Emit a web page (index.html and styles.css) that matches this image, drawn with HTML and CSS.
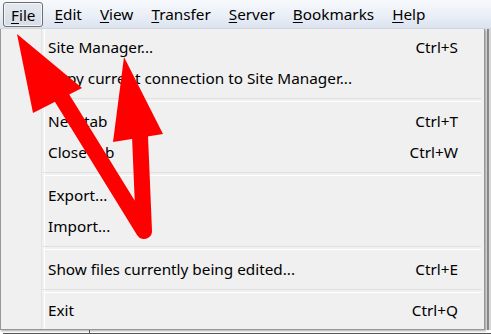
FILE: index.html
```html
<!DOCTYPE html>
<html>
<head>
<meta charset="utf-8">
<title>File menu</title>
<link rel="stylesheet" href="styles.css">
</head>
<body>
<div class="screen">
	<div class="menubar">
		<span class="mitem active"><u>F</u>ile</span>
		<span class="mitem"><u>E</u>dit</span>
		<span class="mitem"><u>V</u>iew</span>
		<span class="mitem"><u>T</u>ransfer</span>
		<span class="mitem"><u>S</u>erver</span>
		<span class="mitem"><u>B</u>ookmarks</span>
		<span class="mitem"><u>H</u>elp</span>
	</div>
	<div class="body">
		<div class="dropdown">
			<div class="row"><span>Site Manager...</span><span class="key">Ctrl+S</span></div>
			<div class="row"><span>Copy current connection to Site Manager...</span></div>
			<div class="sep"></div>
			<div class="row"><span>New tab</span><span class="key">Ctrl+T</span></div>
			<div class="row"><span>Close tab</span><span class="key">Ctrl+W</span></div>
			<div class="sep"></div>
			<div class="row"><span>Export...</span></div>
			<div class="row"><span>Import...</span></div>
			<div class="sep"></div>
			<div class="row"><span>Show files currently being edited...</span><span class="key">Ctrl+E</span></div>
			<div class="sep"></div>
			<div class="row"><span>Exit</span><span class="key">Ctrl+Q</span></div>
		</div>
		<div class="behind"></div>
	</div>
	<div class="foot"><span class="tick"></span></div>

	<svg class="arrows" width="491" height="334" viewBox="0 0 491 334">
		<polyline points="62,98 144,231 140,136" fill="none" stroke="#ff0000" stroke-width="16" stroke-linecap="round" stroke-linejoin="round"/>
		<polygon points="17,34 33,113 82,88" fill="#ff0000"/>
		<polygon points="124,57 113,142 163,134" fill="#ff0000"/>
	</svg>
</div>
</body>
</html>
```

FILE: styles.css
```css
*{ margin:0; padding:0; box-sizing:border-box;}
body{ width:491px; height:334px; overflow:hidden; background:#fff; font-family:"Noto Sans","Open Sans",sans-serif; font-size:15.3px; color:#000;}
.screen{ position:relative; width:491px; height:334px;}

.menubar{ height:29px; display:flex; align-items:center; padding-left:3px; background:linear-gradient(#f7f9fc,#e9eef6 60%,#dbe3ef); border-bottom:1px solid #d5dbe5;}
.mitem{ height:25px; line-height:24px; padding:0 7px; margin-right:4px;}
.mitem u{ text-decoration-thickness:1px; text-underline-offset:2px;}
.mitem.active{ border:1px solid #6e6e6e; border-radius:3px; background:linear-gradient(#e4e9f0,#d7dde6); box-shadow:inset 0 0 0 1px #f4f6f9;}

.body{ display:flex; height:301px;}
.dropdown{ width:485px; height:301px; background:#f0f0f0; border:1px solid #979797; border-top:none; padding-top:2px; position:relative; box-shadow:1px 1px 2px rgba(0,0,0,.35);}
.dropdown:before{ content:''; position:absolute; left:40px; top:0; bottom:0; width:2px; border-left:1px solid #e2e3e3; border-right:1px solid #fff;}
.row{ height:31px; display:flex; align-items:center; justify-content:space-between; padding:0 26px 0 47px; white-space:nowrap;}
.row:last-child{ height:29px; padding-bottom:2px;}
.sep{ height:12px; margin:0 3px 0 42px; position:relative;}
.sep:after{ content:''; position:absolute; left:0; right:0; top:5px; height:2px; border-top:1px solid #e0e0e0; border-bottom:1px solid #fff;}

.behind{ flex:1; background:linear-gradient(90deg,#e8e8e8 0,#e8e8e8 2px,#8a8a8a 2px,#8a8a8a 4px,#d6d6d6 4px);}
.foot{ height:4px; border-bottom:1px solid #555; position:relative; margin-left:3px;}
.tick{ position:absolute; left:86px; bottom:0; width:1px; height:3px; background:#555;}

.arrows{ position:absolute; left:0; top:0; pointer-events:none;}
```
